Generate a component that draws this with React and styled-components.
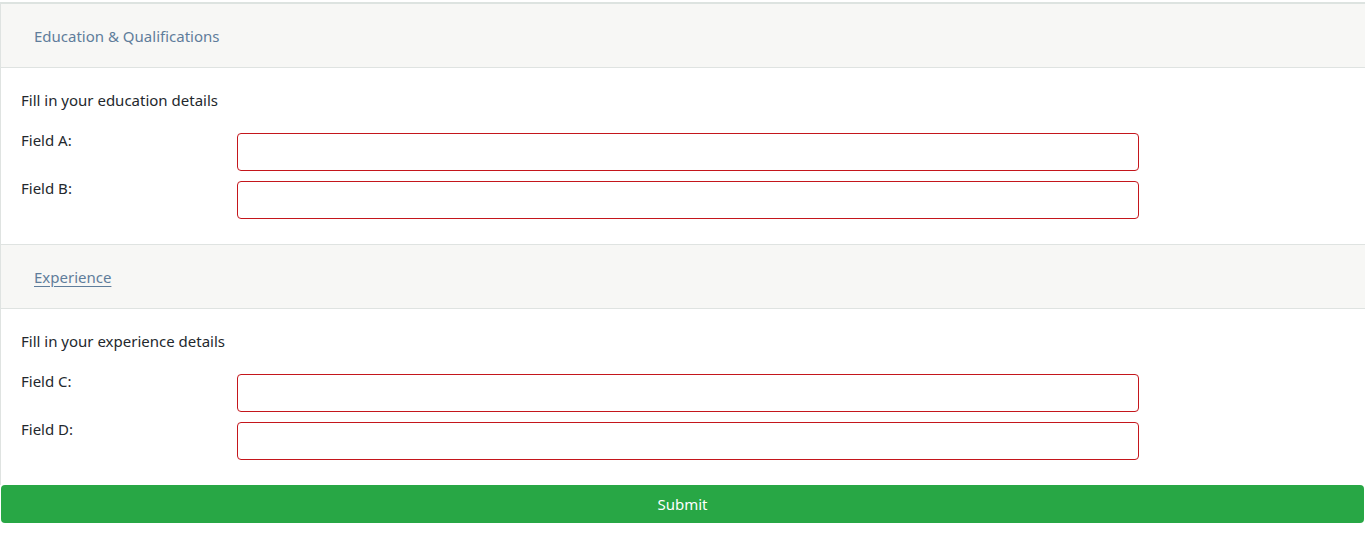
import React from "react";
import styled, { createGlobalStyle } from "styled-components";

const Global = createGlobalStyle`
  html, body { margin: 0; padding: 0; background: #fff; overflow: hidden; }
  body {
    font-family: "Noto Sans", "Open Sans", sans-serif;
    font-size: 15px;
    color: #23282d;
  }
  * { box-sizing: border-box; }
`;

const Page = styled.form`
  padding-top: 2px;
  display: flex;
  flex-direction: column;
`;

const Card = styled.section`
  border-left: 1px solid #dfe3e1;
  border-top: ${(p) => (p.$first ? "2px solid #dde3e0" : "1px solid #dfe3e1")};
  background: #fff;
`;

const Header = styled.div`
  background: #f7f7f5;
  border-bottom: 1px solid #dfe3e1;
  padding: 12px 20px;
  height: 64px;
  display: flex;
  align-items: center;
`;

const HeaderLink = styled.button`
  background: none;
  border: 0;
  padding: 6px 13px;
  font: inherit;
  font-size: 15px;
  color: #5f7d9b;
  text-decoration: ${(p) => (p.$underline ? "underline" : "none")};
  text-underline-offset: 3px;
  cursor: pointer;
`;

const Body = styled.div`
  padding: 20px;
`;

const Intro = styled.p`
  margin: 0 0 16px;
  line-height: 24px;
`;

const Row = styled.div`
  display: grid;
  grid-template-columns: 216px 902px;
  align-items: start;
  margin-bottom: 5px;
`;

const Label = styled.label`
  line-height: 24px;
`;

const Input = styled.input`
  margin-top: 5px;
  height: 38px;
  width: 902px;
  border: 1px solid #c4161c;
  border-radius: 4px;
  padding: 6px 12px;
  font: inherit;
  outline: none;
`;

const Submit = styled.button`
  margin: 0 1px;
  height: 38px;
  background: #28a745;
  border: 0;
  border-radius: 4px;
  color: #fff;
  font: inherit;
  font-size: 15px;
  cursor: pointer;
`;

function Section({ title, intro, fields, first, underline }) {
  return (
    <Card $first={first}>
      <Header>
        <HeaderLink type="button" $underline={underline}>{title}</HeaderLink>
      </Header>
      <Body>
        <Intro>{intro}</Intro>
        {fields.map((f) => (
          <Row key={f}>
            <Label>{f}:</Label>
            <Input type="text" />
          </Row>
        ))}
      </Body>
    </Card>
  );
}

export default function App() {
  return (
    <>
      <Global />
      <Page onSubmit={(e) => e.preventDefault()}>
        <Section
          first
          title="Education & Qualifications"
          intro="Fill in your education details"
          fields={["Field A", "Field B"]}
        />
        <Section
          underline
          title="Experience"
          intro="Fill in your experience details"
          fields={["Field C", "Field D"]}
        />
        <Submit type="submit">Submit</Submit>
      </Page>
    </>
  );
}
